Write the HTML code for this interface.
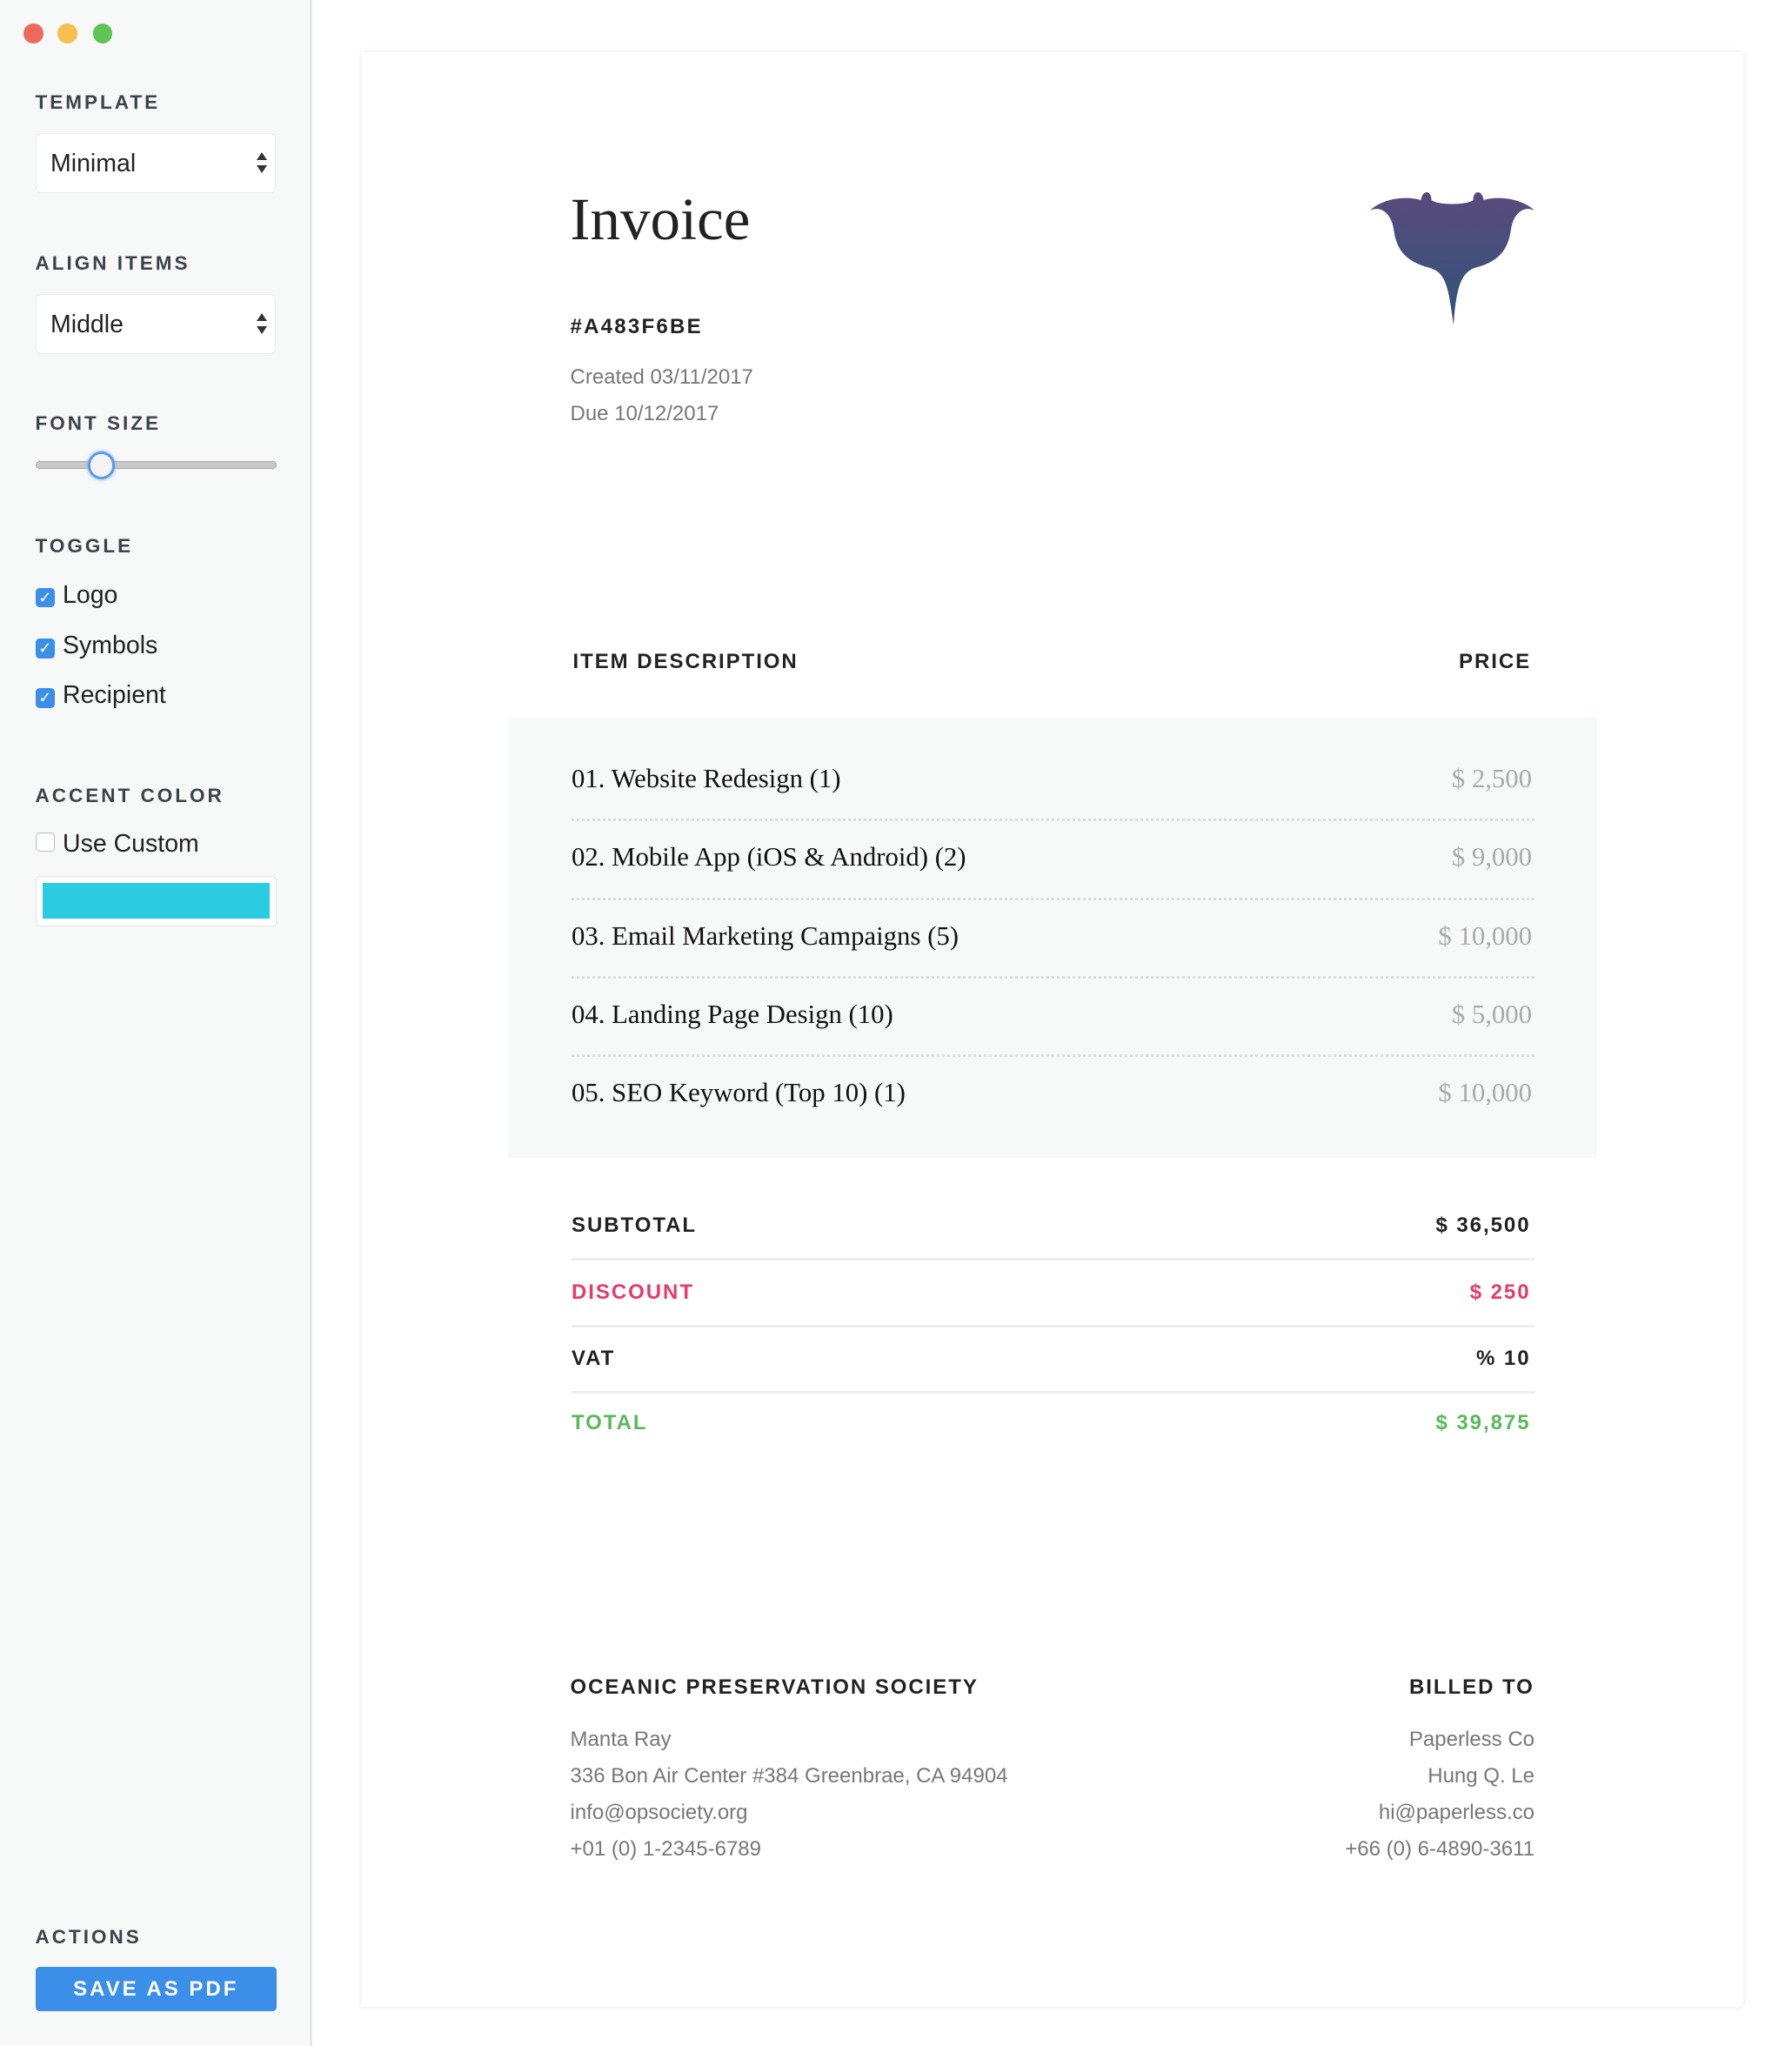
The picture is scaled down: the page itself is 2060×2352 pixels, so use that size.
<!DOCTYPE html>
<html><head><meta charset="utf-8">
<style>
*{box-sizing:border-box;margin:0;padding:0}
html,body{width:2060px;height:2352px;overflow:hidden;background:#fff}
#w{zoom:1.5;width:1374px;height:1568px;position:relative;font-family:"Liberation Sans",sans-serif}
.side{position:absolute;left:0;top:0;width:239px;height:1568px;background:#f7f8f8;border-right:2px solid #e6e6e6}
.dot{position:absolute;top:18px;width:15px;height:15px;border-radius:50%}
.lbl{position:absolute;left:27px;font-size:15px;font-weight:bold;letter-spacing:2px;color:#3d424a}
.sel{position:absolute;left:27px;width:184px;height:46px;background:#fff;border:1px solid #ececec;border-radius:4px;font-size:19px;color:#222;padding:12px 0 0 11px}
.sel:after{content:"";position:absolute;right:6px;top:14px;border:4px solid transparent;border-bottom:6px solid #333;border-top:0}
.sel:before{content:"";position:absolute;right:6px;top:24px;border:4px solid transparent;border-top:6px solid #333;border-bottom:0}
.cb{position:absolute;left:27px;font-size:19px;color:#222}
.cb i{display:inline-block;width:15px;height:15px;border-radius:3px;background:#3b8fe8;vertical-align:0px;margin-right:6px;color:#fff;font-style:normal;font-size:12px;text-align:center;line-height:15px}
.cb i.off{background:#fff;border:1px solid #bbb}
.paper{position:absolute;left:277px;top:40px;width:1059px;height:1498px;background:#fff;box-shadow:0 0 4px rgba(0,0,0,.1)}
.ab{position:absolute}
.serif{font-family:"Liberation Serif",serif}
.caps{font-weight:bold;letter-spacing:1.3px;font-size:16px;color:#222}
.row{position:absolute;left:438px;width:738px;font-family:"Liberation Serif",serif;font-size:20.5px;color:#111}
.row span{position:absolute;right:2px;color:#aaa}
.dash{position:absolute;left:438px;width:738px;border-top:2px dotted #ddd}
.tot{position:absolute;left:438px;width:735px;font-weight:bold;letter-spacing:1.3px;font-size:16px;color:#222}
.tot span{position:absolute;right:0}
.line{position:absolute;left:438px;width:738px;border-top:2px solid #eee}
.g{color:#777;font-size:16px;line-height:28px}
</style></head><body><div id="w">
<div class="side">
<div class="dot" style="left:18px;background:#ee6a5f"></div>
<div class="dot" style="left:44px;background:#f5c04e"></div>
<div class="dot" style="left:71px;background:#5fc454"></div>
<div class="lbl" style="top:70px">TEMPLATE</div>
<div class="sel" style="top:102px">Minimal</div>
<div class="lbl" style="top:193px">ALIGN ITEMS</div>
<div class="sel" style="top:225px">Middle</div>
<div class="lbl" style="top:316px">FONT SIZE</div>
<div style="position:absolute;left:27px;top:353px;width:185px;height:6px;border-radius:3px;background:#c9c9c9;border:1px solid #aaa"></div>
<div style="position:absolute;left:67px;top:346px;width:21px;height:21px;border-radius:50%;background:#f3f3f3;border:2px solid #5a9be8;box-shadow:0 0 3px #7ab0f0"></div>
<div class="lbl" style="top:410px">TOGGLE</div>
<div class="cb" style="top:445px"><i>✓</i>Logo</div>
<div class="cb" style="top:484px"><i>✓</i>Symbols</div>
<div class="cb" style="top:522px"><i>✓</i>Recipient</div>
<div class="lbl" style="top:601px">ACCENT COLOR</div>
<div class="cb" style="top:636px"><i class="off"></i>Use Custom</div>
<div style="position:absolute;left:27px;top:671px;width:185px;height:39px;background:#fff;border:1px solid #e2e2e2;border-radius:3px;padding:5px"><div style="background:#2bcbe2;height:27px"></div></div>
<div class="lbl" style="top:1476px">ACTIONS</div>
<div style="position:absolute;left:27px;top:1507px;width:185px;height:34px;background:#3b8fe8;border-radius:3px;color:#fff;font-weight:bold;letter-spacing:2px;font-size:16px;text-align:center;line-height:34px">SAVE AS PDF</div>
</div>
<div class="paper"></div>
<div class="ab serif" style="left:437px;top:142px;font-size:46px;color:#222">Invoice</div>
<svg class="ab" style="left:1050px;top:145px" width="126" height="104" viewBox="0 0 126 104"><defs><linearGradient id="gr" x1="0" y1="0" x2="0" y2="1"><stop offset="0" stop-color="#5a4a7c"/><stop offset="1" stop-color="#2e5478"/></linearGradient></defs><path fill="url(#gr)" d="M0,16 C8,8 25,4 39,8 C40,0 47,0 47,8 C52,12 74,12 79,8 C79,0 86,0 87,8 C100,4 118,8 126,16 C118,12 110,18 108,30 C106,45 100,55 80,60 C70,64 66,74 64,104 C60,74 58,64 46,60 C26,55 20,45 18,30 C16,18 8,12 0,16 Z"/></svg>
<div class="ab caps" style="left:437px;top:241px;letter-spacing:1.5px">#A483F6BE</div>
<div class="ab g" style="left:437px;top:275px">Created 03/11/2017<br>Due 10/12/2017</div>
<div class="ab caps" style="left:439px;top:498px">ITEM DESCRIPTION</div>
<div class="ab caps" style="left:1118px;top:498px">PRICE</div>
<div class="ab" style="left:389px;top:550px;width:835px;height:337px;background:#f7f8f8"></div>
<div class="row" style="top:585px">01. Website Redesign (1)<span>$ 2,500</span></div>
<div class="dash" style="top:627px"></div>
<div class="row" style="top:645px">02. Mobile App (iOS &amp; Android) (2)<span>$ 9,000</span></div>
<div class="dash" style="top:688px"></div>
<div class="row" style="top:706px">03. Email Marketing Campaigns (5)<span>$ 10,000</span></div>
<div class="dash" style="top:748px"></div>
<div class="row" style="top:766px">04. Landing Page Design (10)<span>$ 5,000</span></div>
<div class="dash" style="top:808px"></div>
<div class="row" style="top:826px">05. SEO Keyword (Top 10) (1)<span>$ 10,000</span></div>
<div class="tot" style="top:930px">SUBTOTAL<span>$ 36,500</span></div>
<div class="line" style="top:964px"></div>
<div class="tot" style="top:981px;color:#e8396a">DISCOUNT<span>$ 250</span></div>
<div class="line" style="top:1015px"></div>
<div class="tot" style="top:1032px">VAT<span>% 10</span></div>
<div class="line" style="top:1066px"></div>
<div class="tot" style="top:1081px;color:#5cb85c">TOTAL<span>$ 39,875</span></div>
<div class="ab caps" style="left:437px;top:1284px">OCEANIC PRESERVATION SOCIETY</div>
<div class="ab caps" style="left:1080px;top:1284px">BILLED TO</div>
<div class="ab g" style="left:437px;top:1319px">Manta Ray<br>336 Bon Air Center #384 Greenbrae, CA 94904<br>info@opsociety.org<br>+01 (0) 1-2345-6789</div>
<div class="ab g" style="left:976px;top:1319px;width:200px;text-align:right">Paperless Co<br>Hung Q. Le<br>hi@paperless.co<br>+66 (0) 6-4890-3611</div>
</div></body></html>
